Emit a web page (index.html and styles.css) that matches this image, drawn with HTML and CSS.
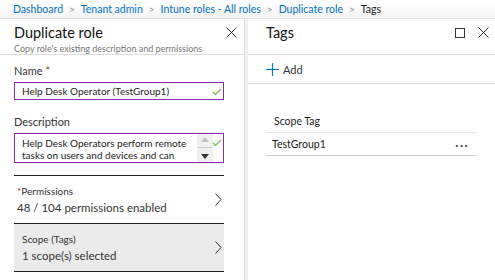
FILE: index.html
```html
<!DOCTYPE html>
<html lang="en">
  <head>
    <meta charset="UTF-8" />
    <title>Tags</title>
    <link rel="stylesheet" href="styles.css">
  </head>
  <body>
    <nav class="crumbs">
      <a>Dashboard</a><span class="sep">&gt;</span>
      <a>Tenant admin</a><span class="sep">&gt;</span>
      <a>Intune roles - All roles</a><span class="sep">&gt;</span>
      <a>Duplicate role</a><span class="sep">&gt;</span>
      <span class="here">Tags</span>
    </nav>
    <div class="blades">
      <section class="blade left">
        <header class="head">
          <div>
            <h1>Duplicate role</h1>
            <p class="sub">Copy role's existing description and permissions</p>
          </div>
          <div class="tools">
            <svg width="11" height="11" viewBox="0 0 11 11"><path d="M0.5 0.5L10.5 10.5M10.5 0.5L0.5 10.5" stroke="#333" stroke-width="1" fill="none"/></svg>
          </div>
        </header>
        <div class="form">
          <label class="lbl">Name <span class="req">*</span></label>
          <div class="field name">
            <span class="val">Help Desk Operator (TestGroup1)</span>
            <svg class="ok" width="10" height="8" viewBox="0 0 10 8"><path d="M1 4L3.5 6.5L9 1" stroke="#7cbb3f" stroke-width="1.1" fill="none"/></svg>
          </div>
          <label class="lbl">Description</label>
          <div class="field desc">
            <span class="val">Help Desk Operators perform remote tasks on users and devices and can</span>
            <div class="scroll">
              <svg width="8" height="5" viewBox="0 0 8 5"><path d="M0 5L4 0L8 5Z" fill="#c2c2c2"/></svg>
              <span class="track"></span>
              <svg width="8" height="5" viewBox="0 0 8 5"><path d="M0 0L4 5L8 0Z" fill="#333"/></svg>
            </div>
            <svg class="ok" width="10" height="8" viewBox="0 0 10 8"><path d="M1 4L3.5 6.5L9 1" stroke="#7cbb3f" stroke-width="1.1" fill="none"/></svg>
          </div>
          <div class="links">
            <div class="link">
              <div>
                <div class="small"><span class="req">*</span>Permissions</div>
                <div class="big">48 / 104 permissions enabled</div>
              </div>
              <svg width="7" height="13" viewBox="0 0 7 13"><path d="M0.5 0.5L6 6.5L0.5 12.5" stroke="#333" stroke-width="1" fill="none"/></svg>
            </div>
            <div class="link active">
              <div>
                <div class="small">Scope (Tags)</div>
                <div class="big">1 scope(s) selected</div>
              </div>
              <svg width="7" height="13" viewBox="0 0 7 13"><path d="M0.5 0.5L6 6.5L0.5 12.5" stroke="#333" stroke-width="1" fill="none"/></svg>
            </div>
          </div>
        </div>
      </section>
      <section class="blade right">
        <header class="head">
          <div>
            <h1 class="t2">Tags</h1>
          </div>
          <div class="tools">
            <svg width="10" height="10" viewBox="0 0 10 10"><rect x="0.5" y="0.5" width="9" height="9" stroke="#333" fill="none"/></svg>
            <svg width="11" height="11" viewBox="0 0 11 11"><path d="M0.5 0.5L10.5 10.5M10.5 0.5L0.5 10.5" stroke="#333" stroke-width="1" fill="none"/></svg>
          </div>
        </header>
        <div class="cmdbar">
          <svg width="13" height="13" viewBox="0 0 13 13"><path d="M6.5 0V13M0 6.5H13" stroke="#0078d4" stroke-width="1.2"/></svg>
          <span>Add</span>
        </div>
        <div class="grid">
          <div class="gh">Scope Tag</div>
          <div class="gr">
            <span>TestGroup1</span>
            <span class="more">&middot;&middot;&middot;</span>
          </div>
        </div>
      </section>
    </div>
  </body>
</html>
```

FILE: styles.css
```css
* {
  box-sizing: border-box;
}
body {
  margin: 0;
  width: 495px;
  height: 280px;
  overflow: hidden;
  font-family: Lato, "Open Sans", sans-serif;
  color: #222;
  background: #fff;
}
.crumbs {
  height: 19px;
  padding: 0 0 0 13px;
  display: flex;
  align-items: center;
  font-size: 10.5px;
  white-space: nowrap;
  background: linear-gradient(#fff, #f4f4f4);
  border-bottom: 1px solid #e3e3e3;
}
.crumbs a {
  color: #0072c6;
}
.crumbs .sep {
  color: #8a8a8a;
  margin: 0 6px;
  font-size: 10px;
}
.crumbs .here {
  color: #222;
}
.blades {
  display: flex;
  height: 261px;
}
.blade {
  display: flex;
  flex-direction: column;
}
.left {
  width: 245px;
  border-right: 1px solid #dcdcdc;
  box-shadow: 2px 0 2px rgba(0, 0, 0, 0.06);
}
.right {
  flex: 1;
  margin-left: 2px;
  border-left: 1px solid #eeeeee;
}
.head {
  height: 36px;
  display: flex;
  justify-content: space-between;
  align-items: flex-start;
  border-bottom: 1px solid #dedede;
  padding: 4px 0 0 14px;
}
h1 {
  margin: 0;
  font-size: 14.5px;
  font-weight: 400;
  line-height: 20px;
  color: #111;
}
h1.t2 {
  padding-left: 4px;
}
.sub {
  margin: 0;
  font-size: 9px;
  line-height: 12px;
  color: #777;
  white-space: nowrap;
}
.tools {
  display: flex;
  align-items: center;
  gap: 13px;
  height: 11px;
  margin-top: 4px;
  padding-right: 6px;
}
.left .tools {
  padding-right: 7px;
}
.form {
  padding: 9px 20px 0 14px;
  display: flex;
  flex-direction: column;
}
.lbl {
  font-size: 11px;
  line-height: 14px;
  color: #333;
  margin-bottom: 4px;
}
.req {
  color: #a4262c;
}
.field {
  border: 1px solid #8530a8;
  display: flex;
  align-items: center;
  position: relative;
  font-size: 10px;
  color: #222;
  padding: 0 0 0 7px;
}
.field .ok {
  position: absolute;
}
.name {
  height: 18px;
  margin-bottom: 15px;
}
.name .ok {
  right: 1px;
  top: 5px;
}
.desc {
  height: 30px;
  align-items: stretch;
  padding-top: 3px;
  padding-right: 10px;
  gap: 2px;
}
.desc .val {
  flex: 1;
  line-height: 12px;
}
.desc .ok {
  top: 5px;
  right: 1px;
}
.scroll {
  width: 16px;
  background: #f0f0f0;
  display: flex;
  flex-direction: column;
  align-items: center;
  justify-content: space-around;
  margin: -3px 0 0 0;
}
.track {
  width: 14px;
  height: 1px;
  background: #c8c8c8;
}
.links {
  margin-top: 12px;
  border-top: 1px solid #222;
}
.link {
  height: 48px;
  display: flex;
  justify-content: space-between;
  align-items: center;
  padding: 0 2px 0 3px;
  border-bottom: 1px solid #222;
}
.link.active {
  background: #ebebeb;
  padding-left: 8px;
}
.small {
  font-size: 10px;
  line-height: 14px;
  color: #333;
}
.big {
  margin-top: 2px;
  font-size: 11.5px;
  line-height: 16px;
  color: #333;
}
.cmdbar {
  height: 29px;
  display: flex;
  align-items: center;
  gap: 4px;
  padding-left: 18px;
  border-bottom: 1px solid #dedede;
  font-size: 11px;
  color: #333;
}
.grid {
  padding: 25px 18px 0 18px;
}
.gh {
  height: 24px;
  padding-left: 8px;
  display: flex;
  align-items: center;
  font-size: 10.5px;
  color: #222;
  border-bottom: 1px solid #e6e6e6;
}
.gr {
  height: 23px;
  display: flex;
  align-items: center;
  justify-content: space-between;
  padding: 0 8px 0 6px;
  font-size: 10.5px;
  color: #222;
  border-bottom: 1px solid #cfcfcf;
}
.more {
  font-size: 14px;
  letter-spacing: 1px;
  color: #444;
}
```
